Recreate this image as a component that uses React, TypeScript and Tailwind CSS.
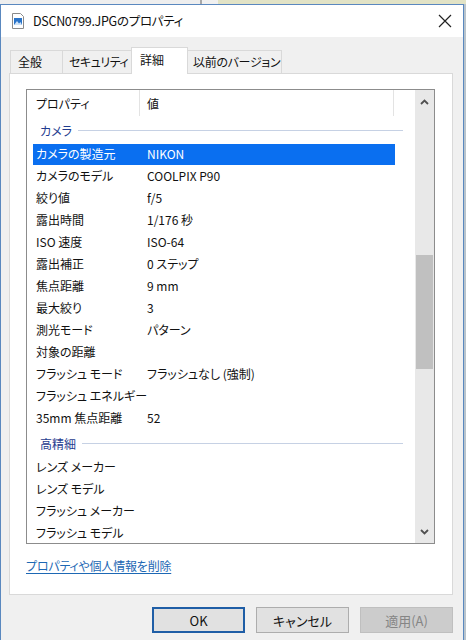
import React from 'react';

type Row = { label: string; value?: string; selected?: boolean };

const cameraRows: Row[] = [
  { label: 'カメラの製造元', value: 'NIKON', selected: true },
  { label: 'カメラのモデル', value: 'COOLPIX P90' },
  { label: '絞り値', value: 'f/5' },
  { label: '露出時間', value: '1/176 秒' },
  { label: 'ISO 速度', value: 'ISO-64' },
  { label: '露出補正', value: '0 ステップ' },
  { label: '焦点距離', value: '9 mm' },
  { label: '最大絞り', value: '3' },
  { label: '測光モード', value: 'パターン' },
  { label: '対象の距離' },
  { label: 'フラッシュ モード', value: 'フラッシュなし (強制)' },
  { label: 'フラッシュ エネルギー' },
  { label: '35mm 焦点距離', value: '52' },
];

const detailRows: Row[] = [
  { label: 'レンズ メーカー' },
  { label: 'レンズ モデル' },
  { label: 'フラッシュ メーカー' },
  { label: 'フラッシュ モデル' },
];

const GroupHeader = ({ title }: { title: string }) => (
  <div className="h-[27px] flex items-center pt-[2px] pl-[13px] pr-[12px]">
    <span className="text-[#1f3c8f]">{title}</span>
    <div className="flex-1 h-px bg-[#c6d1e4] ml-[6px]"></div>
  </div>
);

const PropRow = ({ row }: { row: Row }) => (
  <div className="h-[22px] flex items-center">
    <div
      className={`ml-[6px] w-[362px] h-[21px] flex items-center ${
        row.selected ? 'bg-[#0a6ff0] text-white' : 'text-[#111]'
      }`}
    >
      <div className="w-[114px] pl-[3px] whitespace-nowrap">{row.label}</div>
      <div className="flex-1 whitespace-nowrap">{row.value}</div>
    </div>
  </div>
);

const Chevron = ({ up }: { up?: boolean }) => (
  <svg width="9" height="6" viewBox="0 0 9 6">
    <path
      d={up ? 'M1 5 L4.5 1.5 L8 5' : 'M1 1 L4.5 4.5 L8 1'}
      fill="none"
      stroke="#505050"
      strokeWidth="1.8"
    />
  </svg>
);

const Button = ({ label, variant }: { label: string; variant: 'default' | 'normal' | 'disabled' }) => {
  const styles = {
    default: 'border-2 border-[#1f5ea6] bg-[#e1e1e1] text-[#111]',
    normal: 'border border-[#adadad] bg-[#e1e1e1] text-[#111]',
    disabled: 'border border-[#bfbfbf] bg-[#cccccc] text-[#858585]',
  };
  return (
    <div className={`w-[94px] h-[26px] flex items-center justify-center text-[13px] ${styles[variant]}`}>
      {label}
    </div>
  );
};

export default function App() {
  return (
    <div className="w-[466px] h-[640px] overflow-hidden bg-[#d6dbe0] font-['Noto_Sans_CJK_JP',sans-serif] [font-feature-settings:'palt'] text-[12px] leading-none">
      {/* desktop strip behind the window */}
      <div className="h-[4px] flex">
        <div className="w-[200px] bg-[#eeeeee]"></div>
        <div className="w-[2px] bg-[#a8a8a8]"></div>
        <div className="w-[16px] bg-[#f0f0f0]"></div>
        <div className="flex-1 bg-[#e2e3c6]"></div>
      </div>

      <div className="flex">
        <div className="w-[464px] h-[636px] border-x border-t border-[#5a88bf] flex flex-col">
          {/* title bar */}
          <div className="h-[32px] bg-white flex items-center pl-[11px]">
            <svg width="12" height="16" viewBox="0 0 12 16">
              <path d="M0.5 0.5 H8.5 L11.5 3.5 V15.5 H0.5 Z" fill="#fff" stroke="#8a8a8a" />
              <rect x="2" y="5" width="8" height="7" fill="#2a74c9" />
              <path d="M2 12 L5 8 L7 10.5 L8.5 9 L10 12 Z" fill="#cfe3f7" />
            </svg>
            <span className="ml-[9px] text-[12.5px] tracking-[-0.3px] text-[#111] whitespace-nowrap">DSCN0799.JPGのプロパティ</span>
            <svg className="ml-auto mr-[11px]" width="14" height="14" viewBox="0 0 14 14">
              <path d="M1 1 L13 13 M13 1 L1 13" stroke="#222" strokeWidth="1.2" />
            </svg>
          </div>

          {/* dialog body */}
          <div className="flex-1 bg-[#f0f0f0] pl-[8px] pr-[10px] pt-[10px]">
            {/* tabs */}
            <div className="flex items-end h-[26px] pl-[1px] text-[12px] text-[#111] whitespace-nowrap">
              <div className="w-[52px] h-[23px] border-l border-t border-[#d9d9d9] pl-[7px] flex items-center">全般</div>
              <div className="w-[69px] h-[23px] border-l border-t border-[#d9d9d9] pl-[6px] flex items-center tracking-[-0.5px]">セキュリティ</div>
              <div className="relative z-10 w-[57px] h-[27px] -mb-px bg-white border-x border-t border-[#d9d9d9] pl-[8px] pb-[2px] flex items-center">詳細</div>
              <div className="w-[94px] h-[23px] border-r border-t border-[#d9d9d9] pl-[5px] flex items-center tracking-[-0.3px]">以前のバージョン</div>
            </div>

            {/* tab panel */}
            <div className="h-[522px] bg-white border border-[#d9d9d9] pl-[16px] pt-[15px]">
              <div className="w-[409px] h-[455px] border border-[#8c8c8c] flex">
                <div className="w-[388px] overflow-hidden">
                  <div className="h-[26px] flex text-[#111]">
                    <div className="w-[113px] pl-[9px] border-r border-[#e3e3e3] flex items-center pt-[2px]">プロパティ</div>
                    <div className="w-[254px] pl-[7px] border-r border-[#e3e3e3] flex items-center pt-[2px]">値</div>
                  </div>
                  <GroupHeader title="カメラ" />
                  {cameraRows.map((r) => (
                    <PropRow key={r.label} row={r} />
                  ))}
                  <GroupHeader title="高精細" />
                  {detailRows.map((r) => (
                    <PropRow key={r.label} row={r} />
                  ))}
                </div>
                {/* scrollbar */}
                <div className="w-[19px] bg-[#e8e8e8] flex flex-col">
                  <div className="h-[24px] flex items-center justify-center">
                    <Chevron up />
                  </div>
                  <div className="h-[141px]"></div>
                  <div className="h-[114px] mx-[1px] bg-[#c0c0c0]"></div>
                  <div className="flex-1"></div>
                  <div className="h-[22px] flex items-center justify-center">
                    <Chevron />
                  </div>
                </div>
              </div>

              <div className="mt-[16px] text-[12px] tracking-[-0.2px] text-[#1d68b4] underline underline-offset-2">
                プロパティや個人情報を削除
              </div>
            </div>

            {/* buttons */}
            <div className="flex mt-[12px] pl-[143px] gap-[11px]">
              <Button label="OK" variant="default" />
              <Button label="キャンセル" variant="normal" />
              <Button label="適用(A)" variant="disabled" />
            </div>
          </div>
        </div>
        <div className="w-[2px] h-[636px] bg-[#b9c4cc]"></div>
      </div>
    </div>
  );
}
